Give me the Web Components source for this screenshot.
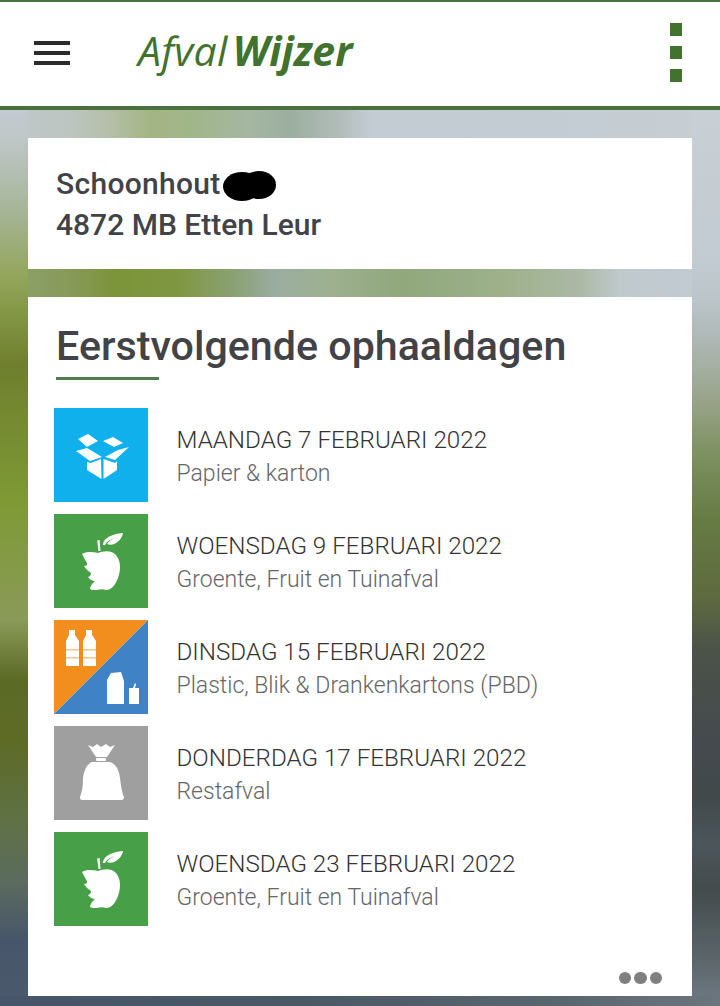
<!DOCTYPE html>
<html lang="nl">
<head>
<meta charset="utf-8">
<title>AfvalWijzer</title>
<style>
html,body{margin:0;padding:0;background:#fff}
body{font-family:Roboto,"Liberation Sans",sans-serif}
</style>
</head>
<body>
<afval-app>
  <afval-header slot="header"></afval-header>
  <address-card>
    <span style="letter-spacing:.3px">Schoonhout<redact-blob></redact-blob></span><br>4872 MB Etten Leur
  </address-card>
  <pickup-card heading="Eerstvolgende ophaaldagen">
    <pickup-row date="MAANDAG 7 FEBRUARI 2022" kind="Papier &amp; karton"><waste-icon type="paper"></waste-icon></pickup-row>
    <pickup-row date="WOENSDAG 9 FEBRUARI 2022" kind="Groente, Fruit en Tuinafval"><waste-icon type="gft"></waste-icon></pickup-row>
    <pickup-row date="DINSDAG 15 FEBRUARI 2022" kind="Plastic, Blik &amp; Drankenkartons (PBD)"><waste-icon type="pbd"></waste-icon></pickup-row>
    <pickup-row date="DONDERDAG 17 FEBRUARI 2022" kind="Restafval"><waste-icon type="rest"></waste-icon></pickup-row>
    <pickup-row date="WOENSDAG 23 FEBRUARI 2022" kind="Groente, Fruit en Tuinafval"><waste-icon type="gft"></waste-icon></pickup-row>
  </pickup-card>
</afval-app>
<script>
function el(name, html){
  customElements.define(name, class extends HTMLElement{
    connectedCallback(){
      if(this.shadowRoot) return;
      const r=this.attachShadow({mode:'open'});
      r.innerHTML = typeof html==='function' ? html(this) : html;
    }
  });
}
el('afval-app',`<style>
:host{display:flex;flex-direction:column;width:720px;height:1006px;overflow:hidden;
background-color:#8a9a80;background-repeat:no-repeat;
background-image:
 linear-gradient(90deg,#bfc7c8 0,#bcc5c0 42px,#b5bfa8 82px,#a4b584 122px,#a1b688 162px,#a5b6a3 222px,#9cae9f 262px,#b2bdb9 312px,#c3cbd3 342px,#c6ced4 664px),
 linear-gradient(90deg,#8c9f66 0,#87995a 42px,#7c9438 87px,#7f9742 152px,#8ca27a 212px,#9aada2 247px,#9eb090 302px,#90a87c 372px,#9db08a 472px,#abb9a5 552px,#c0c9cc 592px,#c2cad2 664px),
 linear-gradient(90deg,#46556a 0,#4a5866 300px,#5a666e 560px,#6b757d 720px),
 linear-gradient(180deg,#c3cad0 0,#bfc7c8 28px,#b4bfb4 60px,#a3b28f 110px,#94a65c 165px,#869a4a 195px,#6f7f2e 255px,#7f9a35 395px,#8a9a58 510px,#5b6a25 570px,#5d6b25 630px,#5f7145 710px,#5b6b5e 770px,#47566a 830px,#4a5a6c 896px),
 linear-gradient(180deg,#c8cfd5 0,#c3ccd2 140px,#bcc5ca 187px,#b0b9b8 225px,#97a287 295px,#7f9263 340px,#667b44 410px,#5f6b3f 485px,#4b5349 540px,#454a4e 630px,#41494b 685px,#4c555a 735px,#444b4d 780px,#5a6468 845px,#6f7a84 896px);
background-size:664px 28px,664px 28px,720px 10px,28px 896px,28px 896px;
background-position:28px 110px,28px 269px,0 996px,0 110px,692px 110px}
.body{display:flex;flex-direction:column;gap:28px;padding:28px 28px 0}
</style><slot name="header"></slot><div class="body"><slot></slot></div>`);

el('afval-header',`<style>
:host{display:flex;align-items:center;justify-content:space-between;box-sizing:border-box;height:110px;flex:none;
background:#fff;border-top:2px solid #4a7040;border-bottom:4px solid #4a7040;padding:0 38px 2px 34px}
.left{display:flex;align-items:center;gap:68px}
.burger{display:flex;flex-direction:column;gap:6px;width:36px}
.burger i{display:block;height:4px;background:#2b2b2b}
.logo{font-family:"Open Sans",Lato,sans-serif;font-style:italic;font-size:41px;line-height:50px;color:#41732f;white-space:nowrap;display:flex;gap:5px;position:relative;top:-3px}
.logo .a{font-weight:400;letter-spacing:.3px}
.logo .b{font-weight:700}
.more{display:flex;flex-direction:column;gap:10px;position:relative;top:-1px}
.more i{display:block;width:12px;height:13px;background:#41732f}
</style>
<div class="left"><div class="burger"><i></i><i></i><i></i></div>
<div class="logo"><span class="a">Afval</span><span class="b">Wijzer</span></div></div>
<div class="more"><i></i><i></i><i></i></div>`);

el('redact-blob',`<style>
:host{display:inline-block;width:53px;height:30px;vertical-align:-7px;margin-left:2px}
svg{display:block}
</style><svg width="53" height="30" viewBox="0 0 53 30"><ellipse cx="19" cy="15.5" rx="19" ry="14.5" fill="#000"/><ellipse cx="36" cy="14" rx="17" ry="14" fill="#000"/></svg>`);

el('address-card',`<style>
:host{display:block;box-sizing:border-box;height:131px;background:#fff;padding:25px 28px;
font:500 30px/41px Roboto,sans-serif;color:#424347}
</style><slot></slot>`);

el('pickup-card',h=>`<style>
:host{display:block;box-sizing:border-box;height:699px;background:#fff;padding:24px 26px 0;position:relative}
h2{margin:0 0 0 2px;font:500 41.2px/50px Roboto,sans-serif;color:#424347;white-space:nowrap}
.rule{width:103px;height:2.5px;background:#4f7d50;margin:6px 0 28.5px 2px}
.rows{display:flex;flex-direction:column;gap:12px}
.more{position:absolute;right:30px;bottom:12px;display:flex;gap:3px}
.more i{display:block;width:12.5px;height:12.5px;border-radius:50%;background:#808080}
</style><h2>${h.getAttribute('heading')}</h2><div class="rule"></div>
<div class="rows"><slot></slot></div><div class="more"><i></i><i></i><i></i></div>`);

el('pickup-row',h=>{
  const esc=s=>s.replace(/&/g,'&amp;');
  return `<style>
:host{display:flex;align-items:center;gap:28.5px;height:94px}
.t{display:flex;flex-direction:column;font-family:Roboto,sans-serif;font-weight:300;font-size:24.2px;line-height:33px;white-space:nowrap;padding-top:3px}
.d{color:#333}.k{color:#666;font-size:23px}
</style><slot></slot><div class="t"><span class="d">${esc(h.getAttribute('date'))}</span><span class="k">${esc(h.getAttribute('kind'))}</span></div>`;
});

const BLUR='<defs><filter id="b" x="-10%" y="-10%" width="120%" height="120%"><feGaussianBlur stdDeviation=".7"/></filter></defs>';
const ICONS={
paper:`<rect width="94" height="94" fill="#0fb0ec"/><g filter="url(#b)" fill="#fff">
<path d="M24 31 34 26 44 33 33 39Z"/><path d="M49 33 59 29 69 35 60 39Z"/>
<path d="M22 43 33 40 48 49 36 53Z"/><path d="M51 49 64 42 75 39 61 52Z"/>
<path d="M33 54 37 55 47 51 47.5 71 33 62Z"/><path d="M49.5 51 61 55 63 53 63 62 49.5 71Z"/></g>`,
gft:`<rect width="94" height="94" fill="#47a047"/><g filter="url(#b)" fill="#fff">
<path d="M28 40C33 37 39 38 44 39 50 37 57 36 62 41 67 47 67 56 64 64 61 72 57 76 52 76 49 75 46 75 43 76 39 76 36 76 36 74Q37 70 41 67 37 67 34 63 37 62 37 59 33 57 30 52 34 52 33 49 31 46 28 40Z"/>
<path d="M43.2 26.5 45.6 26 46.5 37 44.5 37Z"/>
<path d="M49 31C49 24 58 20 69 19 68 26 60 33 53 30 55 27 58 25 61 24 57 25 53 27 51 31Z"/></g>`,
pbd:`<path d="M0 0H94L0 94Z" fill="#f28e1e"/><path d="M94 0V94H0Z" fill="#3f83c6"/><g filter="url(#b)" fill="#fff">
<path d="M15 10H21V15L25 21V46H12V21L15 15Z"/><path d="M32 10H38V15L42 21V46H29V21L32 15Z"/>
<path d="M53 60 57 53 67 52 70 61V84H53Z"/>
<path d="M75 68H79L81 63 82 64 81 68H85V84H75Z"/></g>
<g filter="url(#b)" fill="#f5c48a"><rect x="12" y="29" width="13" height="1.5"/><rect x="29" y="29" width="13" height="1.5"/><rect x="12" y="37" width="13" height="1.5"/><rect x="29" y="37" width="13" height="1.5"/></g>
<path filter="url(#b)" d="M62 54V84" stroke="#9dc0e2" stroke-width="1"/>`,
rest:`<rect width="94" height="94" fill="#9f9f9f"/><g filter="url(#b)" fill="#fff">
<path d="M34 19 39 21 43 18 47 21 52 18 56 21 61 19 53 31H42Z"/>
<rect x="42" y="32" width="10" height="3" rx="1"/>
<path d="M38 36H56C62 38 65 44 66 52 67 60 68 67 70 71 70 74 68 74 66 74H30C27 74 26 74 26 71 28 66 29 60 29 52 30 44 33 38 38 36Z"/></g>`
};
el('waste-icon',h=>`<style>
:host{display:block;width:94px;height:94px;flex:none}
svg{display:block}
</style><svg width="94" height="94" viewBox="0 0 94 94">${BLUR}${ICONS[h.getAttribute('type')]}</svg>`);
</script>
</body>
</html>
